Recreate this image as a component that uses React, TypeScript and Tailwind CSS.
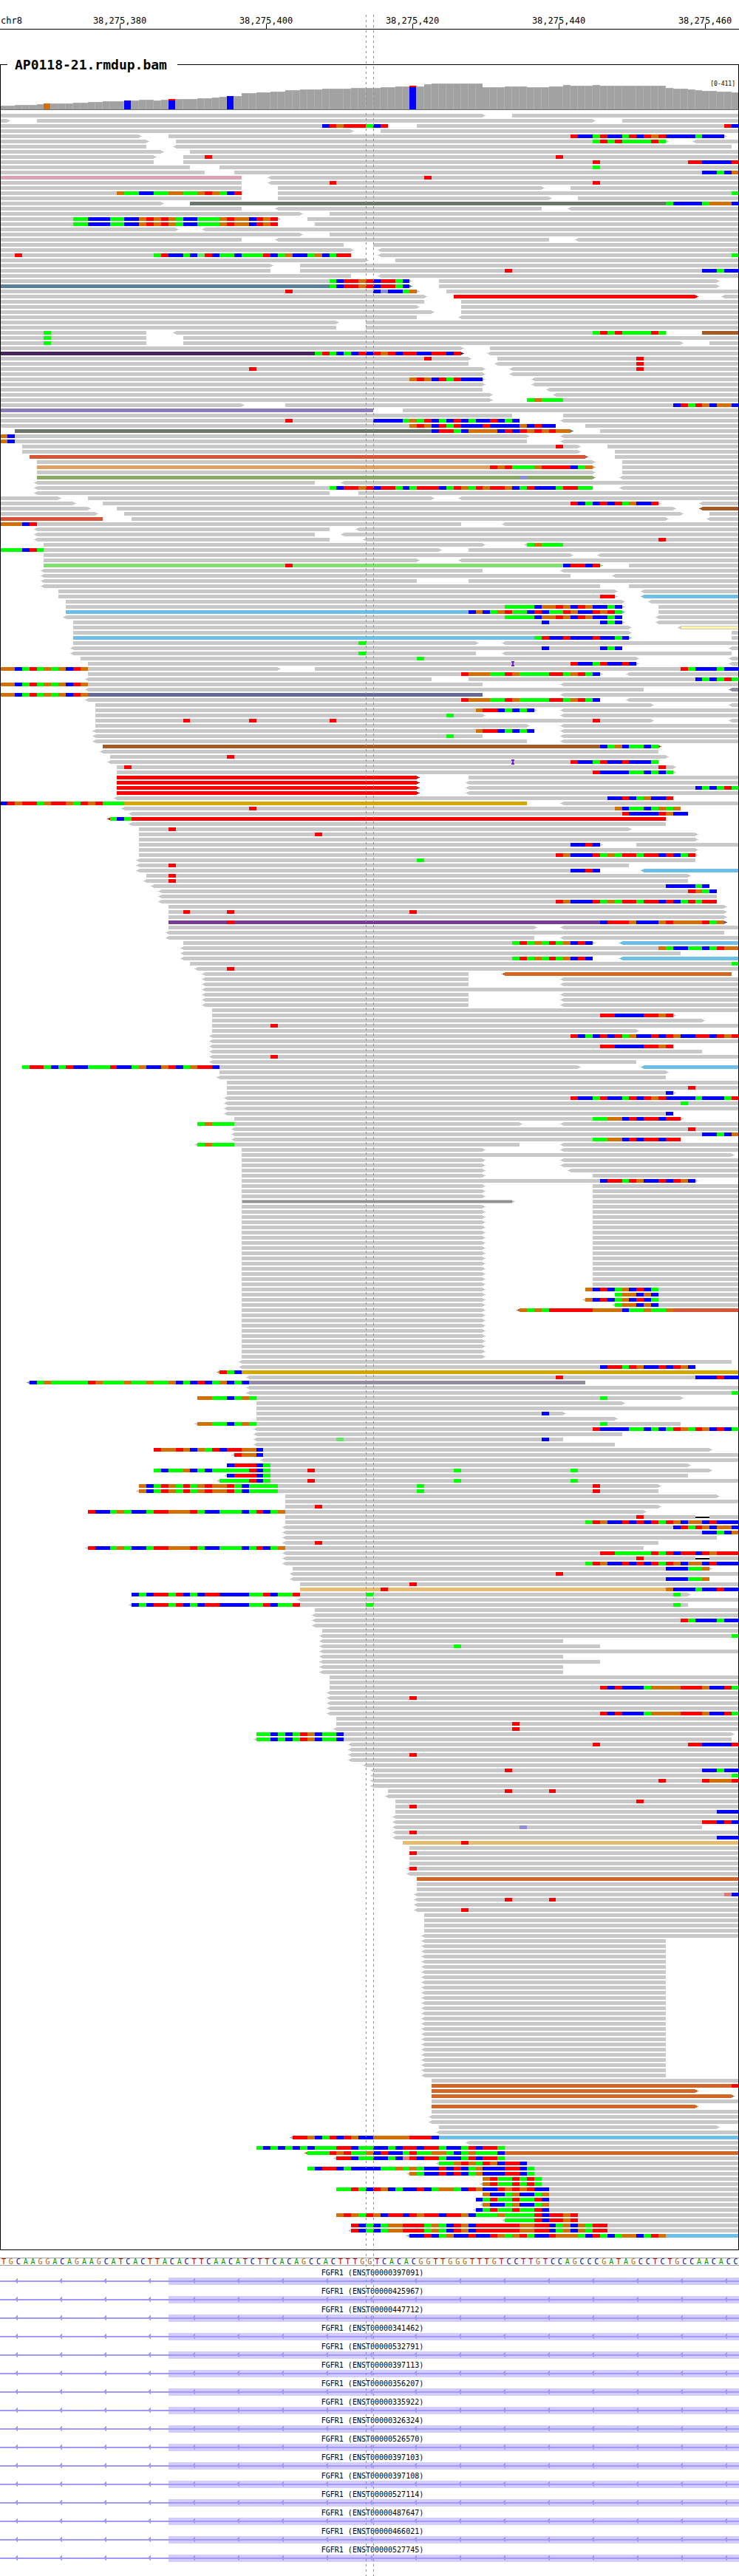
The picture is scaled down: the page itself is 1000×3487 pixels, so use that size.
import React from "react";

const BASES = 101;
const WIDTH = 1000;
const ROW_PITCH = 7;
const BAR = 5;
const READS_TOP = 66;
const COVERAGE_BASE = 60;
const PANEL_HEIGHT = 2958;

const edge = (i: number) => Math.round((i * WIDTH) / BASES);

const TICKS = ["38,275,380", "38,275,400", "38,275,420", "38,275,440", "38,275,460"];

const SEQUENCE =
  "TGCAAGGACAGAAGCATCACTTACACTTCAACATCTTCACAGCCACTTTGGTCACACGGTTGGGTTTGTCCTTGTCCAGCCCGATAGCCTCTGCCAACACC";

const LETTER_CLASS: Record<string, string> = {
  A: "text-[#009600]",
  C: "text-[#000096]",
  G: "text-[#b06410]",
  T: "text-[#b00000]",
};

const TRANSCRIPTS = [
  "397091", "425967", "447712", "341462", "532791", "397113", "356207", "335922",
  "326324", "526570", "397103", "397108", "527114", "487647", "466021", "527745",
];

// Mismatch colours by base; lower case marks low-quality calls.
const BASE_FILL: Record<string, string> = {
  A: "#00ff00", C: "#0000ff", G: "#d17105", T: "#ff0000",
  a: "#64e664", v: "#8c8cdc", p: "#e07878",
};

const READ_FILL: Record<string, string> = {
  P: "#dba4b5", D: "#6c776c", S: "#5a819b", R: "#ff0000", N: "#a35a24", U: "#46235f",
  L: "#8c7bb9", V: "#d75438", E: "#dda066", F: "#87a962", H: "#82de72", K: "#6fbee6",
  W: "#fff5aa", M: "#938ca0", J: "#666a99", Y: "#d1a700", Q: "#773c94", X: "#d16627",
  C: "#e7bc72", Z: "#909090",
};

// One alignment row per line. "a-b" is a read from base a to base b, "a>b" and
// "a<b" add a strand arrow, ":K" names its colour, "12ACGT" places mismatches
// from base 12, "95~97" is a deletion, "70I" an insertion, "3*" repeats the row.
const READS = `
0>66 70-101
0>1 5>81 85-101
0-53 57-101 44CTGTTTACT 99TC
0>48 52-101
0>19 23>99 78TCCATCCATCTGTCCCCACCC
0>20 24>91 95<101 81ATATAAAATA
0-20 24<100
0>22 26-101
0>21 25-101 28T 76T
0-21 25-101 81T 94TTCCCCT
0-26 30-101 81A
0-28 32-101 96CCACG
0-33:P 37<101 58T
0-33 37<101 45T 81T
0-33 38>74 78-101
0-33 38-101 16GAACCAAGGAAGTGACT 100A
0-33 38>75 79-101
0>22 26-101:D 91ACCCCAGGGC
0-33 38<74 78<101
0>41 45-101
0>38 42-101 10AACCCAACCGTGTGACCAAAGTGGCTGT
0-38 43-101 10AACCCAACCGTGTGACCAAAGTGGCTGT
0>24 28<101
0>41 45-101
0-33 38<75 79<101
0-47 51-101
0>48 52<101
0-48 52<101 2T 21ATCCACaTCAACAAATCAGCCAGCATT 100A
0>50 54-101
0>37 41-101
0-37 41-101 69T 96CCACC
0-48 52<101
0>56 60>98 45ACTTGTCTTAC
0>56:S 60>98 45ACTTGTCTTAC
0>57 61-101 39T 51CvCCAG
0>58 62>95:R 99<101
0-58 63-101
0>57 63-101
0>59 63-101
0-57 63<101
0>46 50-101
0-46 50-101
0-20 24<91 96-101:N 6A 81ATATAAAATA
0-20 25-101 6A
0-20 25>93 97-101 6A
0>63 67-101
0>63:U 67<101 43ATACACTCTGTCTTCCTTCT
0>64 68-101 58T 87T
0-64 68<101 87T
0>66 70<101 34T 87T
0>66 70<101
0>66 73<101 56GTGCTATCCC
0>66 73<101
0-66 75<101
0>67 76<101
0>67 72-101 72AGAAA
0>33 39-101 92CTATGCGGC
0-51:L 55-101
0-70 77-101
0-71 77<101 39T 51CCCCAGATCACTCACCTCAC
0-76 80-101 56GTGCTATCCCTCCCCGCTCC
2>78:D 82-101 59CTTACGGGGCTCTGTGTGG
0>72 77<101 0GC
0-72 77<101 0GC
3>79 83-101 76T
3>79 84-101
4>80:V 84-101
5>81 85-101
5>81:E 85-101 67TGTAAAGTTTTCAG
5>81 85-101
5>81:F 85<101 71v
5<43 47<101
5<81 85<101 45ACTTGTCTTACATTTCATGATGTTGCATCCCATTAA
5<45 49-101
0>8 12>59 63<101
0>10 14>90 96<101 78TCACTCTAGCCT
0>12 16>92 96<101:N
0>13 17>93 97-101
0-14:V 18>91 97<101
0-63 69<101 0GGGCT
5<45 49<101
5<43 47<101
5<45 50<101 90T
6>66 72<101 72AGAAA
0>60 64-101 0AAACTA
6>78 82<101
6>57 63<101
6>82:H 86-101 39T 77CTTCT
6<66 77<101
6<78 84<101
6<57 64-101
6<82 86-101
8>84 88<101
8>84 88<101:K 82TT
9>85 89<101
9>85 90-101 69AAAACGGTGCTGCCAC
9>85:K 90-101 64CGCAGTAACTCAATGCCTGTA
9<85 90<101 69AAAACGGTGCTGCCAC
10>85 90<101 74C 82CAC
10>86 93<101:W
10>86 100-101
10>86:K 100-101 73ATCCTCCCTCCAC
10>65 69<101 49A
10<85 100<101 74C 82CAC
10<65 69<100 49A
11>87 100<101 57A
12>87 100<101 70I 78TCCATCCTC
0>38 43-101 0GGCATAGAGCTG 93TACCCACC
12>82 86<101 63TGGGAATGAAAATTAGTAC
12<59 64-101 95CACATA
0-66 77<101 0GGCATAGAGCTG
12<88 100<101:M
0-66:J 77<101 0GGCATAGAGCTG
12<82 86<101 63TGGGAATGAAAATTAGTAC
13>89 100<101
13>73 77<101 65GTTCACAC
13>66 77<101 61A
13>89 100<101 25T 34T 45T 81T
13>72 77<101
13<73 77<101 65GTTCACAC
13<66 77<101 61A
13<72 77<101
14>90:N 82CAGCAACA
14<90
15>91 31T
15<90 70I 78TCCATCCTCCCA
16>92 17T 90T
16>92 81TCCCCAACACA
16>57:R 64-101
16>57:R 64<101
16>57:R 64<101 95CACATA
16>57:R 64<101
16<92 83CCTCAGCCT
0-72:Y 77<101 0CTGTTAGTTGATGTAAA
17<93 34T 84GCAACAGAG
18<94 85TCCCCTGCC
15<91:R 15ACA
18<91
19>86 23T
19>95 43T
19>95
19>82 87-101 78CCTC
19>95
19>95 76TGCCCTAGATTATTCTCAT
19<95 57A
19<86 23T
19<82 88<101:K 78CCTC
20>94 23T
20<94 23T
21<97 91CCCCAC
22<98 94TGAC
22<98
22<98 76TGCCCTAGATTATTCTCATATT
23>99
23>99 25T 31T 56T
23>99
23>99:Q 31T 82CTTTGCCCGTGGGGTAG
23>73 77<101
23<99
23<73 77<101
25>81 85<101:K 70ATAGATAGCTC
25<101 90GACCAACATGG
25<93
25<81 85<101:K 70ATAGATAGCTC
26-101 100A
27<101 31T
28<64 69<100:X
2* 28<64 77<101
28<101
3* 28<64 77<101
29-101
29>92 82TTCCCCTTGT
29>96
29-101 37T
29>87
29<101 78TCACTCTAGCCTCTGCCTTCTGT
29<101
29<92 82TTCCCCTTGT
29<96
29<101 37T
29<87
3>79 88<101:K 3ATTACATCCAAATCCAGCCGTCAGTTC
30>91
30<91
31-101
31-101 94T
31>92 91C
31<101 78TCCATCCATCTGTCCCCACCCAT
31<101 93A
31<101
31<92 91C
32>93 81AAGGCTCTTCTT
27>71 77<101 27AGAAA
32<101 94T
32<101 96CCACG
32<93 81AAGGCTCTTCTT
27<71 77<101 27AGAAA
33>66 77<101
33>100
2* 33>66 77<101
33>66 78<101
33>66 81-101
33>95 82CTTATGCCTCTGC
3* 33>66 81-101
33>70:Z 81-101
16* 33>66 81-101
33>66 80-101 80GCTCAGCTCA
33>66 84-101 84AGGCGC
33>66 80<101 80GCTCAGCTCA
33>66 84<101 84AGGCGC
33>66 71<101:V 71GAGATTTTTTGGGGCAAGAAG
9* 33>66
33<100
33<95 82CTTATGCCTCTGC
30<101:Y 30TAC
34<101 76T 95CCCTCC
4<80:M 4CAGAAAAATGAAAGAAGAAGCACTCAGCAC
34<101
34<101 100A
27>93 27GGAACAGA 82A
35>85
35-101
35>77 74C
35>84
27<93 27GGAACAGA 82A
35<101 81TCCCCAACACATGATGCTCA
35<85
35<77 46a 74C
35<84
21>97 21TGGTGCGATCTTGGC
32<101 32TGGC
36<101
31>94 31CTTTCA
21>97 21ACAAGCACAAAAATCA 42T 62A 78A
31<94 31CTTTCA
30<101 30AAAATCA 42T 62A 78A
19>90 19GCATGATAGTGGTACAAAA 57A 81T
19<90 19GCATGATAGTGGTACAAAA 57A 81T
39>98
39-101
39>90 43T
12>88 12TCCAGACCATTGGGTACCAAACATCAG
39-95 95~97 97-101 87T
39-101 80ATGCCTCTCTATGCGGCTCCC
39<101 92CTATGCGGC
39<101 96CCACG
39<98
39<90 43T
12<88 12TCCAGACCATTGGGTACCAAACATCAG
39<101 82TTAAAAATATCTTCTGTTT
39<95 95~97 97-101 87T
39<101 80ATGCCTCTCTATGCGGCTCCC
40>97 91CCCAAG
40<101 76T
40<97 91CCCAAG
41-101 56T
41-101:C 52T 91GCCCACCTCC
18>94 18CACTTATCACTTCCCCAATCAAT 50A 92A
41<101
18<94 18CACTTATCACTTCCCCAATCAAT 50A 92A
43-101
43<101
43<101 93TACCCACC
43<101
44-101
44<101 100A
44<77
44<82 62A
44<101
44<77
44<82
2* 44<77
2* 45-101
45-101 82TCTCCCAGGGGTTTGCCTA
45<101
45<101 56T
2* 45<101
45<101 82TCTCCCAGGGGTTTGCCTA
46-101
46-101 70T
46<101 70T
35>100 35AACACATGCAAC
35<100 35AACACATGCAAC
48<101 81T 94TTCCCCT
48<101
48<101 56T
48<101
50<101
51<101 69T 96CCACC
51<101 100A
51<101 90T 96TGGGT
51<101
53-101 69T 75T
53<101
54-101 87T
54-101 56T
54-101 98CCC
54<101
54<101 96TTCTC
54<96 71v
54<101 56T
54<101 98CCC
55-101:C 63T
56-101
56-101 56T
2* 56-101
56<101 56T
56<101
57-101:X
2* 57-101
57<101 99pC
57<101 69T 75T
57<101
57<101 63T
4* 58-101
58<101
27* 58<91
59-101
59-101:X 100T
59>95:X
59>100:X
59-101
59>95:X
59-101
2* 59<101
60>98
60<101
40<101:K 40TTGCATCTGCCGGGGGTTTC
64<101
35-101 35ACACACACAAATTCAACCACTTCTTACCATCTTA
42<101:X 42AAATGTAAGCTCCATAAGGACAGAAAC
46<101 46TTCAACCACpTCTTACCATCTTA
60<101 60AAGTGATGCTTC
42-101 42ACTTCACCCCAAGAGACCTCTCAGCCCTTCA
56<101 56GACCTCTCAGCCCTTCA
66-101 66GTAATATA
66<101 66GTAATATA
46-101 46AATACTGCACCTCAGGACTGCCTGTGTCC
66-101 66GCCAGCCAG
65-101 65CATAATAATC
66<101 66GCCAGCCAG
65<101 65CATAATAATC
46-101 46GTGATGCTTCTGTTCTTGCAAAGAAAATCTTGT
69<101 69AAAATCTTGT
48-101 48TCACAGGTTTAGACTGCTTTTTTGGTTCAGCGATT
48<101 48TCACAGGTTTAGACTGCTTTTTTGGTTCAGCGATT
56<101:K 56CCTCAGCCTCCTGAGTACCTGGGACTACAGGCATG
`
  .trim()
  .split("\n")
  .flatMap((line) => {
    const repeat = /^(\d+)\* (.*)$/.exec(line);
    return repeat ? Array<string>(Number(repeat[1])).fill(repeat[2]) : [line];
  });

// [first base, bar height] steps of the depth profile.
const DEPTH: [number, number][] = [
  [0, 5], [2, 6], [5, 7], [6, 8], [10, 9], [12, 10], [14, 11], [17, 12], [19, 13], [21, 12],
  [22, 13], [23, 14], [27, 15], [29, 16], [30, 17], [31, 18], [33, 22], [35, 23], [37, 24],
  [39, 26], [41, 27], [44, 28], [48, 29], [52, 30], [54, 31], [56, 32], [57, 31], [58, 34],
  [59, 35], [66, 30], [69, 31], [72, 30], [75, 31], [77, 33], [78, 32], [81, 33], [82, 32],
  [91, 29], [92, 28], [94, 27], [95, 26], [96, 25], [98, 24], [100, 23],
];

const VARIANTS: Record<number, { main: string; top: string; topHeight: number; topWidth: number }> = {
  6: { main: "#d17105", top: "#00ff00", topHeight: 1, topWidth: 1 },
  17: { main: "#0000ff", top: "#ff0000", topHeight: 1, topWidth: 1 },
  23: { main: "#0000ff", top: "#ff0000", topHeight: 2, topWidth: 9 },
  31: { main: "#0000ff", top: "#ff0000", topHeight: 1, topWidth: 1 },
  56: { main: "#0000ff", top: "#ff0000", topHeight: 2, topWidth: 9 },
};

function Coverage() {
  return (
    <g>
      {Array.from({ length: BASES }, (_, i) => {
        const h = DEPTH.filter(([start]) => start <= i).at(-1)![1];
        const x = edge(i);
        const y = COVERAGE_BASE - h;
        const variant = VARIANTS[i];
        return (
          <g key={i}>
            <rect x={x} y={y} width={edge(i + 1) - x} height={h} fill="#b0b0b0" />
            <rect
              x={x}
              y={variant ? y : y + 1}
              width={9}
              height={variant ? h : h - 1}
              fill={variant ? variant.main : "#a2a2a2"}
            />
            {variant && (
              <rect
                x={x + (9 - variant.topWidth) / 2}
                y={y}
                width={variant.topWidth}
                height={variant.topHeight}
                fill={variant.top}
              />
            )}
          </g>
        );
      })}
      <rect x={0} y={COVERAGE_BASE} width={WIDTH} height={1} fill="#707070" />
    </g>
  );
}

function ReadBar({ from, to, strand, tone, y }: { from: number; to: number; strand: string; tone?: string; y: number }) {
  const x0 = edge(from);
  const x1 = edge(to);
  const outlined = tone === "W" || tone === "Z";
  const fill = tone && !outlined ? READ_FILL[tone] : "#c8c8c8";
  let d = `M${x0} ${y}H${x1}V${y + BAR}H${x0}Z`;
  if (strand === ">") d += `M${x1} ${y + 1}h2v3h-2zM${x1 + 2} ${y + 2}h2v1h-2z`;
  if (strand === "<") d += `M${x0 - 2} ${y + 1}h2v3h-2zM${x0 - 4} ${y + 2}h2v1h-2z`;
  return (
    <>
      <path d={d} fill={fill} />
      {outlined && <rect x={x0 + 1} y={y + 1} width={x1 - x0 - 1} height={3} fill={READ_FILL[tone!]} />}
    </>
  );
}

function ReadRow({ row, y }: { row: string; y: number }) {
  const bars: React.ReactNode[] = [];
  const marks: React.ReactNode[] = [];
  row.split(" ").forEach((token, n) => {
    const read = /^(\d+)([-<>~])(\d+)(?::(\w))?$/.exec(token);
    if (read) {
      const from = Number(read[1]);
      const to = Number(read[3]);
      if (read[2] === "~") {
        bars.push(<rect key={n} x={edge(from)} y={y + 2} width={edge(to) - edge(from)} height={2} fill="#000" />);
      } else {
        bars.push(<ReadBar key={n} from={from} to={to} strand={read[2]} tone={read[4]} y={y} />);
      }
      return;
    }
    const start = parseInt(token, 10);
    const letters = token.replace(/^\d+/, "");
    if (letters === "I") {
      const x = edge(start);
      marks.push(<path key={n} d={`M${x - 1} ${y - 1}h4v2h-1v3h-2v-3h-1zM${x - 1} ${y + 4}h4v2h-4z`} fill="#7a1ee0" />);
      return;
    }
    [...letters].forEach((base, k) => {
      const x = edge(start + k);
      marks.push(
        <rect key={`${n}-${k}`} x={x} y={y} width={edge(start + k + 1) - x} height={BAR} fill={BASE_FILL[base]} />,
      );
    });
  });
  return (
    <g>
      {bars}
      {marks}
    </g>
  );
}

function AlignmentPanel() {
  return (
    <section>
      <header className="mt-[37px] flex h-[21px] items-center">
        <span className="h-px w-[10px] bg-black" />
        <h1 className="w-[230px] pl-[10px] text-[18px] leading-[21px] font-bold whitespace-nowrap">AP0118-21.rmdup.bam</h1>
        <span className="h-px flex-1 bg-black" />
      </header>
      <div className="relative -mt-[10px]">
        <svg
          className="block h-[2958px] w-full"
          viewBox={`0 0 ${WIDTH} ${PANEL_HEIGHT}`}
          preserveAspectRatio="none"
          shapeRendering="crispEdges"
          role="img"
          aria-label="Read depth and alignments"
        >
          <Coverage />
          {READS.map((row, k) => (
            <ReadRow key={k} row={row} y={READS_TOP + k * ROW_PITCH} />
          ))}
          <path d={`M0 0h1v${PANEL_HEIGHT - 1}h998V0h1v${PANEL_HEIGHT}H0z`} fill="#000" />
        </svg>
        <span className="absolute top-5 right-[5px] text-[8px] leading-3">[0-411]</span>
      </div>
    </section>
  );
}

function Ruler() {
  return (
    <header className="flex overflow-hidden border-b border-black pt-5 text-[12px]">
      <span className="w-[6.3%] flex-none pl-px leading-4">chr8</span>
      {TICKS.map((tick) => (
        <div key={tick} className="relative flex h-[19px] w-[19.8%] flex-none justify-center">
          <span className="leading-4">{tick}</span>
          <span className="absolute bottom-0 h-[7px] w-px bg-black" />
        </div>
      ))}
    </header>
  );
}

function Sequence() {
  return (
    <div className="mt-[10px] flex h-[11px] border-y border-[#a0a0a0] text-[10px] leading-[9px]">
      {[...SEQUENCE].map((base, i) => (
        <span key={i} className={`min-w-0 flex-1 text-center ${LETTER_CLASS[base]}`}>
          {base}
        </span>
      ))}
    </div>
  );
}

function Transcript({ id }: { id: string }) {
  return (
    <li>
      <p className="h-[15px] pt-px pl-2 text-center text-[10px] leading-[15px]">FGFR1 (ENST00000{id})</p>
      <svg
        className="block h-[10px] w-full"
        viewBox="0 0 1000 10"
        preserveAspectRatio="none"
        shapeRendering="crispEdges"
        aria-hidden="true"
      >
        <rect x={228} y={0} width={772} height={10} fill="#d2ccff" />
        <rect x={0} y={4} width={1000} height={2} fill="#a098ff" />
        {Array.from({ length: 17 }, (_, i) => (
          <path key={i} d={`M${20 + i * 60} 4h1v-1h1v-1h1v-1h1v7h-1v-1h-1v-1h-1v-1h-1z`} fill="#a098ff" />
        ))}
      </svg>
    </li>
  );
}

const GUIDE =
  "pointer-events-none absolute top-5 bottom-0 w-px bg-[repeating-linear-gradient(to_bottom,#909090_0px,#909090_3px,transparent_3px,transparent_7px)]";

export default function App() {
  return (
    <main className="relative overflow-hidden bg-white pb-[19px] font-['DejaVu_Sans_Mono',monospace] text-black">
      <Ruler />
      <AlignmentPanel />
      <Sequence />
      <ul className="mt-px">
        {TRANSCRIPTS.map((id) => (
          <Transcript key={id} id={id} />
        ))}
      </ul>
      <span className={`${GUIDE} left-[49.5%]`} />
      <span className={`${GUIDE} left-[50.5%]`} />
    </main>
  );
}
